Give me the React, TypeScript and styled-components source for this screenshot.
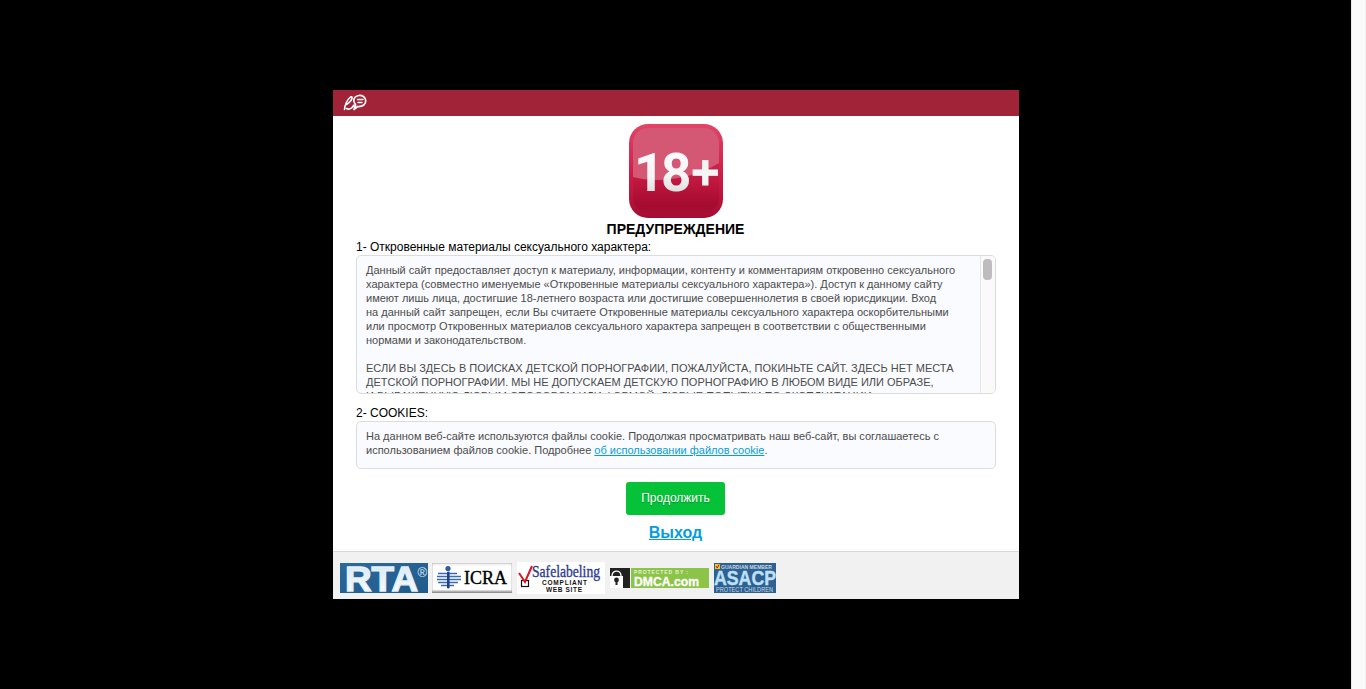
import React from 'react';
import styled, { createGlobalStyle } from 'styled-components';

const Global = createGlobalStyle`
  html, body { margin: 0; padding: 0; height: 100%; overflow: hidden; background: #000; }
  #root { height: 100%; }
`;

const Page = styled.div`
  display: flex;
  height: 689px;
  font-family: "Liberation Sans", Arial, sans-serif;
`;
const Backdrop = styled.main`
  flex: 1;
  background: #000;
  display: flex;
  align-items: flex-start;
  justify-content: center;
  padding-top: 90px;
  padding-left: 1px;
  box-sizing: border-box;
`;
const ScrollTrack = styled.div`
  width: 15px;
  background: #fafafa;
  border-left: 1px solid #e8e8e8;
  border-right: 1px solid #efefef;
  box-sizing: border-box;
`;
const Modal = styled.section`
  width: 686px;
  height: 509px;
  background: #fff;
  display: flex;
  flex-direction: column;
`;
const Header = styled.header`
  height: 26px;
  background: #a02337;
  display: flex;
  align-items: center;
  padding-left: 10px;
`;
const Body = styled.div`
  flex: 1;
  padding: 8px 23px 0;
  display: flex;
  flex-direction: column;
`;
const Badge = styled.div`
  align-self: center;
  height: 94px;
`;
const Title = styled.h1`
  margin: 3px 0 0;
  padding-right: 1px;
  font-size: 14px;
  line-height: 16px;
  font-weight: 700;
  color: #000;
  text-align: center;
`;
const SectionLabel = styled.div`
  font-size: 12px;
  line-height: 14px;
  color: #000;
  margin-top: ${p => p.$gap}px;
`;
const TextBox = styled.div`
  position: relative;
  box-sizing: border-box;
  margin-top: 1px;
  height: ${p => p.$h}px;
  border: 1px solid #dcdcdc;
  border-radius: 5px;
  background: #fafbfe;
  overflow: hidden;
  padding: ${p => p.$pad};
  font-size: 11px;
  line-height: 14px;
  color: #4c4c4c;
  p { margin: 0 0 14px; }
  a { color: #069de0; }
`;
const ScrollGutter = styled.div`
  position: absolute;
  top: 0;
  right: 0;
  bottom: 0;
  width: 14px;
  background: #fafafa;
  border-left: 1px solid #e6e6e6;
`;
const ScrollThumb = styled.div`
  width: 9px;
  height: 21px;
  margin: 3px 0 0 2px;
  border-radius: 4px;
  background: #bdbdbd;
`;
const Actions = styled.div`
  margin-top: 13px;
  padding-right: 1px;
  display: flex;
  flex-direction: column;
  align-items: center;
`;
const Continue = styled.button`
  width: 99px;
  height: 33px;
  border: 0;
  border-radius: 3px;
  background: #05c238;
  color: #fff;
  font: 12px "Liberation Sans", Arial, sans-serif;
  text-shadow: 0 1px 1px rgba(0,0,0,.25);
  padding: 0 0 2px;
`;
const Exit = styled.a`
  margin-top: 9px;
  font-size: 16px;
  line-height: 18px;
  font-weight: 700;
  color: #069de0;
  text-decoration: underline;
`;
const Footer = styled.footer`
  height: 48px;
  box-sizing: border-box;
  background: #f1f1f1;
  border-top: 1px solid #d8d8d8;
  display: flex;
  align-items: flex-start;
  padding: 9px 0 0 7px;
`;
const Logo = styled.svg`
  display: block;
  flex: none;
  margin-right: ${p => p.$mr}px;
  margin-top: ${p => p.$mt}px;
`;

const HeaderLogo = () => (
  <svg width="24" height="18" viewBox="0 0 24 18" fill="none" stroke="#fff" strokeLinecap="round" strokeLinejoin="round">
    <path d="M1.5 15.5 C2 11 4 6 7.5 3 C9.5 1.8 9.5 4.5 8 6.5 C6.5 8.5 5 9.5 3.5 10.5 M3.5 14.5 C6 16 9 14.5 11 11" strokeWidth="1.6" />
    <path d="M11 15.5 L14.5 12.5 C20 13 23 10 22.7 6.5 C22.4 3 19 1.2 16 1.5 C12.5 1.8 10.5 4 10.8 7 C11 8.5 11.6 9.5 12.6 10.5 Z" strokeWidth="1.7" />
    <path d="M14.5 5.5 H20 M15 8.5 H19" strokeWidth="1.4" />
  </svg>
);

const AdultBadge = () => (
  <svg width="94" height="94" viewBox="0 0 94 94">
    <defs>
      <linearGradient id="bg" x1="0" y1="0" x2="0" y2="1">
        <stop offset="0" stopColor="#e44468" />
        <stop offset=".55" stopColor="#cc1c47" />
        <stop offset="1" stopColor="#a50d32" />
      </linearGradient>
      <linearGradient id="inner" x1="0" y1="0" x2="0" y2="1">
        <stop offset="0" stopColor="#d24565" />
        <stop offset=".62" stopColor="#c01840" />
        <stop offset=".9" stopColor="#a60b30" />
        <stop offset="1" stopColor="#a80e33" />
      </linearGradient>
      <linearGradient id="num" x1="0" y1="0" x2="0" y2="1">
        <stop offset="0" stopColor="#ffffff" />
        <stop offset=".55" stopColor="#f4f4f4" />
        <stop offset="1" stopColor="#cdcdcd" />
      </linearGradient>
    </defs>
    <rect width="94" height="94" rx="19" fill="url(#bg)" />
    <rect x="4" y="4" width="86" height="85" rx="15" fill="url(#inner)" />
    <path d="M4 19 a15 15 0 0 1 15 -15 h56 a15 15 0 0 1 15 15 v20 C66 54 30 60 4 53 Z" fill="#d45874" />
    <text y="67" fontFamily="Roboto, 'Liberation Sans', sans-serif" fontWeight="700" fontSize="53" fill="url(#num)">
      <tspan x="5">1</tspan>
      <tspan x="32">8</tspan>
    </text>
    <text x="62" y="65" fontFamily="'Liberation Sans', sans-serif" fontWeight="700" fontSize="49" fill="#f4f4f4" stroke="#f4f4f4" strokeWidth=".8">+</text>
  </svg>
);

const RtaLogo = () => (
  <Logo $mr={4} $mt={2} width="88" height="30" viewBox="0 0 88 30">
    <defs>
      <linearGradient id="rta" x1="0" y1="0" x2="0" y2="1">
        <stop offset="0" stopColor="#d3e6f4" />
        <stop offset="1" stopColor="#ffffff" />
      </linearGradient>
      <linearGradient id="rtabg" x1="0" y1="0" x2="1" y2="1">
        <stop offset="0" stopColor="#2c6a9c" />
        <stop offset="1" stopColor="#1f5a8a" />
      </linearGradient>
    </defs>
    <rect width="88" height="30" fill="url(#rtabg)" />
    <text x="5" y="28" fontFamily="'Liberation Sans', sans-serif" fontWeight="700" fontSize="35" fill="url(#rta)" stroke="#e6f0f8" strokeWidth="1.3" textLength="73" lengthAdjust="spacingAndGlyphs">RTA</text>
    <text x="77.5" y="14" fontFamily="'Liberation Sans', sans-serif" fontSize="13" fill="#dfeef8">®</text>
  </Logo>
);

const IcraLogo = () => (
  <Logo $mr={5} $mt={2} width="80" height="30" viewBox="0 0 80 30">
    <defs>
      <linearGradient id="icra" x1="0" y1="0" x2="0" y2="1">
        <stop offset="0" stopColor="#e8e8e8" />
        <stop offset=".12" stopColor="#ffffff" />
        <stop offset=".88" stopColor="#ffffff" />
        <stop offset="1" stopColor="#7b7b7b" />
      </linearGradient>
    </defs>
    <rect width="80" height="30" fill="url(#icra)" stroke="#9a9a9a" strokeWidth=".6" />
    <circle cx="16" cy="5.5" r="2.6" fill="#2b5ba6" />
    <g stroke="#3c6ab0" strokeWidth="1.3">
      <path d="M6 10.5h19M5 13.5h24M5 16.5h24M6 19.5h20M9 22.5h13" />
    </g>
    <rect x="15" y="8.5" width="2.6" height="17" rx="1.3" fill="#1d4386" />
    <text x="32" y="21" fontFamily="'Liberation Serif', serif" fontSize="18" fill="#000" stroke="#000" strokeWidth=".35" textLength="43" lengthAdjust="spacingAndGlyphs">ICRA</text>
  </Logo>
);

const SafeLogo = () => (
  <Logo $mr={5} $mt={1} width="88" height="32" viewBox="0 0 88 32">
    <rect width="88" height="32" fill="#fff" />
    <text x="15" y="15" fontFamily="'Liberation Serif', serif" fontSize="17" fill="#2b3a8c" stroke="#2b3a8c" strokeWidth=".35" textLength="68" lengthAdjust="spacingAndGlyphs">Safelabeling</text>
    <text x="25" y="23" fontFamily="'Liberation Sans', sans-serif" fontWeight="700" fontSize="6.5" fill="#111" textLength="45">COMPLIANT</text>
    <text x="29" y="30" fontFamily="'Liberation Sans', sans-serif" fontWeight="700" fontSize="6.5" fill="#111" textLength="36">WEB SITE</text>
    <rect x="4.5" y="18.5" width="7" height="6" fill="#fff" stroke="#111" strokeWidth="1.2" />
    <path d="M2 11 L8 20 L15 4" fill="none" stroke="#d8141e" strokeWidth="2" />
  </Logo>
);

const DmcaLogo = () => (
  <Logo $mr={5} $mt={7} width="99" height="20" viewBox="0 0 99 20">
    <rect x="21" width="78" height="20" fill="#8cc44a" />
    <rect width="20" height="20" fill="#222" />
    <path d="M2 8 C2 1.5 11 1.5 11 8" fill="none" stroke="#fff" strokeWidth="1.4" />
    <rect y="8" width="13" height="12" fill="#fff" />
    <circle cx="6.5" cy="12" r="2.4" fill="#222" />
    <rect x="5.5" y="13" width="2" height="4" fill="#222" />
    <text x="24" y="6" fontFamily="'Liberation Sans', sans-serif" fontWeight="700" fontSize="5" fill="#e4f3cf" textLength="54">PROTECTED BY :</text>
    <text x="24" y="18" fontFamily="'Liberation Sans', sans-serif" fontWeight="700" fontSize="12" fill="#fff" stroke="#fff" strokeWidth=".3" textLength="65" lengthAdjust="spacingAndGlyphs">DMCA.com</text>
  </Logo>
);

const AsacpLogo = () => (
  <Logo $mr={0} $mt={2} width="62" height="30" viewBox="0 0 62 30">
    <rect width="62" height="30" fill="#2d6191" />
    <rect x="1" y="1" width="5" height="5" fill="#f3c316" />
    <path d="M2 3 L3.3 5 L5 1.5" stroke="#c4161c" fill="none" strokeWidth="1" />
    <text x="7" y="6" fontFamily="'Liberation Sans', sans-serif" fontWeight="700" fontSize="6" fill="#c9d7e3" textLength="51" lengthAdjust="spacingAndGlyphs">GUARDIAN MEMBER</text>
    <text x="0" y="22" fontFamily="'Liberation Sans', sans-serif" fontWeight="700" fontSize="20" fill="#bfe0f8" stroke="#bfe0f8" strokeWidth=".4" textLength="62" lengthAdjust="spacingAndGlyphs">ASACP</text>
    <text x="2" y="28.5" fontFamily="'Liberation Sans', sans-serif" fontSize="6.5" fill="#c9d7e3" textLength="57" lengthAdjust="spacingAndGlyphs">PROTECT CHILDREN</text>
  </Logo>
);

export default function App() {
  return (
    <Page>
      <Global />
      <Backdrop>
        <Modal>
          <Header><HeaderLogo /></Header>
          <Body>
            <Badge><AdultBadge /></Badge>
            <Title>ПРЕДУПРЕЖДЕНИЕ</Title>
            <SectionLabel $gap={3}>1- Откровенные материалы сексуального характера:</SectionLabel>
            <TextBox $h={139} $pad="7px 15px 0 9px">
              <p>
                Данный сайт предоставляет доступ к материалу, информации, контенту и комментариям откровенно сексуального<br />
                характера (совместно именуемые «Откровенные материалы сексуального характера»). Доступ к данному сайту<br />
                имеют лишь лица, достигшие 18-летнего возраста или достигшие совершеннолетия в своей юрисдикции. Вход<br />
                на данный сайт запрещен, если Вы считаете Откровенные материалы сексуального характера оскорбительными<br />
                или просмотр Откровенных материалов сексуального характера запрещен в соответствии с общественными<br />
                нормами и законодательством.
              </p>
              <p>
                ЕСЛИ ВЫ ЗДЕСЬ В ПОИСКАХ ДЕТСКОЙ ПОРНОГРАФИИ, ПОЖАЛУЙСТА, ПОКИНЬТЕ САЙТ. ЗДЕСЬ НЕТ МЕСТА<br />
                ДЕТСКОЙ ПОРНОГРАФИИ. МЫ НЕ ДОПУСКАЕМ ДЕТСКУЮ ПОРНОГРАФИЮ В ЛЮБОМ ВИДЕ ИЛИ ОБРАЗЕ,<br />
                И ВЫРАЖЕННУЮ ЛЮБЫМ СПОСОБОМ ИЛИ ФОРМОЙ. ЛЮБЫЕ ПОПЫТКИ ПО ЭКСПЛУАТАЦИИ
              </p>
              <ScrollGutter><ScrollThumb /></ScrollGutter>
            </TextBox>
            <SectionLabel $gap={12}>2- COOKIES:</SectionLabel>
            <TextBox $h={48} $pad="7px 30px 0 9px">
              На данном веб-сайте используются файлы cookie. Продолжая просматривать наш веб-сайт, вы соглашаетесь с использованием файлов cookie. Подробнее <a href="#cookie">об использовании файлов cookie</a>.
            </TextBox>
            <Actions>
              <Continue type="button">Продолжить</Continue>
              <Exit href="#exit">Выход</Exit>
            </Actions>
          </Body>
          <Footer>
            <RtaLogo />
            <IcraLogo />
            <SafeLogo />
            <DmcaLogo />
            <AsacpLogo />
          </Footer>
        </Modal>
      </Backdrop>
      <ScrollTrack />
    </Page>
  );
}
